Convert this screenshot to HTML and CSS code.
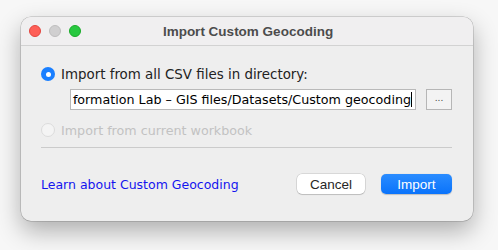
FILE: index.html
```html
<!DOCTYPE html>
<html>
<head>
<meta charset="utf-8">
<link rel="stylesheet" href="styles.css">
</head>
<body>
<div class="window">
  <div class="titlebar">
    <div class="lights">
      <span class="light red"></span>
      <span class="light gray"></span>
      <span class="light green"></span>
    </div>
    <div class="title">Import Custom Geocoding</div>
  </div>
  <div class="content">
    <div class="radio-row">
      <span class="radio checked"></span>
      <span class="label main">Import from all CSV files in directory:</span>
    </div>
    <div class="field-row">
      <div class="field"><span class="field-text">formation Lab – GIS files/Datasets/Custom geocoding</span><span class="caret"></span></div>
      <div class="browse">...</div>
    </div>
    <div class="radio-row disabled">
      <span class="radio"></span>
      <span class="label">Import from current workbook</span>
    </div>
    <div class="sep"></div>
    <div class="footer">
      <span class="link">Learn about Custom Geocoding</span>
      <div class="buttons">
        <span class="btn cancel">Cancel</span>
        <span class="btn primary">Import</span>
      </div>
    </div>
  </div>
</div>
</body>
</html>
```
FILE: styles.css
```css
html, body {
  margin: 0;
  padding: 0;
}
body {
  width: 498px;
  height: 250px;
  background: #f7f7f7;
  overflow: hidden;
  font-family: "DejaVu Sans", sans-serif;
}
.window {
  margin: 17px 0 0 21px;
  width: 452px;
  height: 204px;
  background: #eeeeee;
  border-radius: 10px;
  box-shadow: 0 0 0 0.5px rgba(0,0,0,0.25), 0 10px 24px rgba(0,0,0,0.3);
  overflow: hidden;
  display: flex;
  flex-direction: column;
}
.titlebar {
  height: 28px;
  background: #f0eff0;
  border-bottom: 1px solid #d2d2d2;
  position: relative;
  display: flex;
  align-items: center;
  justify-content: center;
}
.lights {
  position: absolute;
  left: 8px;
  top: 8px;
  display: flex;
  gap: 8px;
}
.light {
  width: 12px;
  height: 12px;
  border-radius: 50%;
  box-sizing: border-box;
}
.red { background: #fe5f57; border: 0.5px solid #e2463f; }
.gray { background: #d0cfd0; border: 0.5px solid #bdbdbd; }
.green { background: #28c840; border: 0.5px solid #1aab29; }
.title {
  font-family: "Liberation Sans", sans-serif;
  font-weight: bold;
  font-size: 13.5px;
  color: #4c4c4c;
  margin-left: 2px;
}
.content {
  padding: 20px 21px 0 20px;
  display: flex;
  flex-direction: column;
}
.radio-row {
  display: flex;
  align-items: center;
  gap: 6px;
  height: 16px;
  font-size: 12.7px;
  color: #222;
}
.label.main { font-size: 13.4px; }
.radio {
  width: 14px;
  height: 14px;
  border-radius: 50%;
  box-sizing: border-box;
  background: #fff;
  border: 1px solid #c8c8c8;
  position: relative;
  flex-shrink: 0;
}
.radio.checked {
  background: #1a7fff;
  border: none;
}
.radio.checked::after {
  content: "";
  position: absolute;
  left: 4.5px;
  top: 4.5px;
  width: 5px;
  height: 5px;
  border-radius: 50%;
  background: #fff;
}
.disabled { color: #c2c2c2; }
.disabled .radio { background: #f4f4f4; border-color: #dcdcdc; }
.field-row {
  display: flex;
  align-items: center;
  margin: 7px 0 0 29px;
  gap: 10px;
}
.field {
  width: 346px;
  height: 21px;
  box-sizing: border-box;
  background: #fff;
  border: 1px solid #b9b9b9;
  display: flex;
  justify-content: flex-end;
  align-items: center;
  overflow: hidden;
  white-space: nowrap;
  font-size: 12.7px;
  color: #000;
  padding-right: 3px;
}
.field-text { flex-shrink: 0; }
.caret {
  width: 1px;
  height: 15px;
  background: #000;
  flex-shrink: 0;
}
.browse {
  width: 26px;
  height: 21px;
  box-sizing: border-box;
  border: 1px solid #b6b6b6;
  background: #f3f3f3;
  font-size: 9px;
  color: #444;
  text-align: center;
  line-height: 17px;
}
.radio-row.disabled { margin-top: 12px; }
.sep {
  height: 1px;
  background: #cbcbcb;
  margin-top: 9px;
}
.footer {
  display: flex;
  align-items: center;
  justify-content: space-between;
  margin-top: 26px;
}
.link {
  color: #1414ee;
  font-size: 12.5px;
}
.buttons {
  display: flex;
  gap: 16px;
}
.btn {
  height: 20px;
  box-sizing: border-box;
  border-radius: 5px;
  font-family: "Liberation Sans", sans-serif;
  font-size: 13.5px;
  display: flex;
  align-items: center;
  justify-content: center;
}
.cancel {
  width: 68px;
  background: #fff;
  color: #262626;
  box-shadow: 0 0 0 0.5px rgba(0,0,0,0.18), 0 1px 1px rgba(0,0,0,0.12);
}
.primary {
  width: 71px;
  background: linear-gradient(#2a8cff, #0a73fb);
  color: #fff;
  box-shadow: 0 0.5px 1px rgba(0,0,0,0.2);
}
```
